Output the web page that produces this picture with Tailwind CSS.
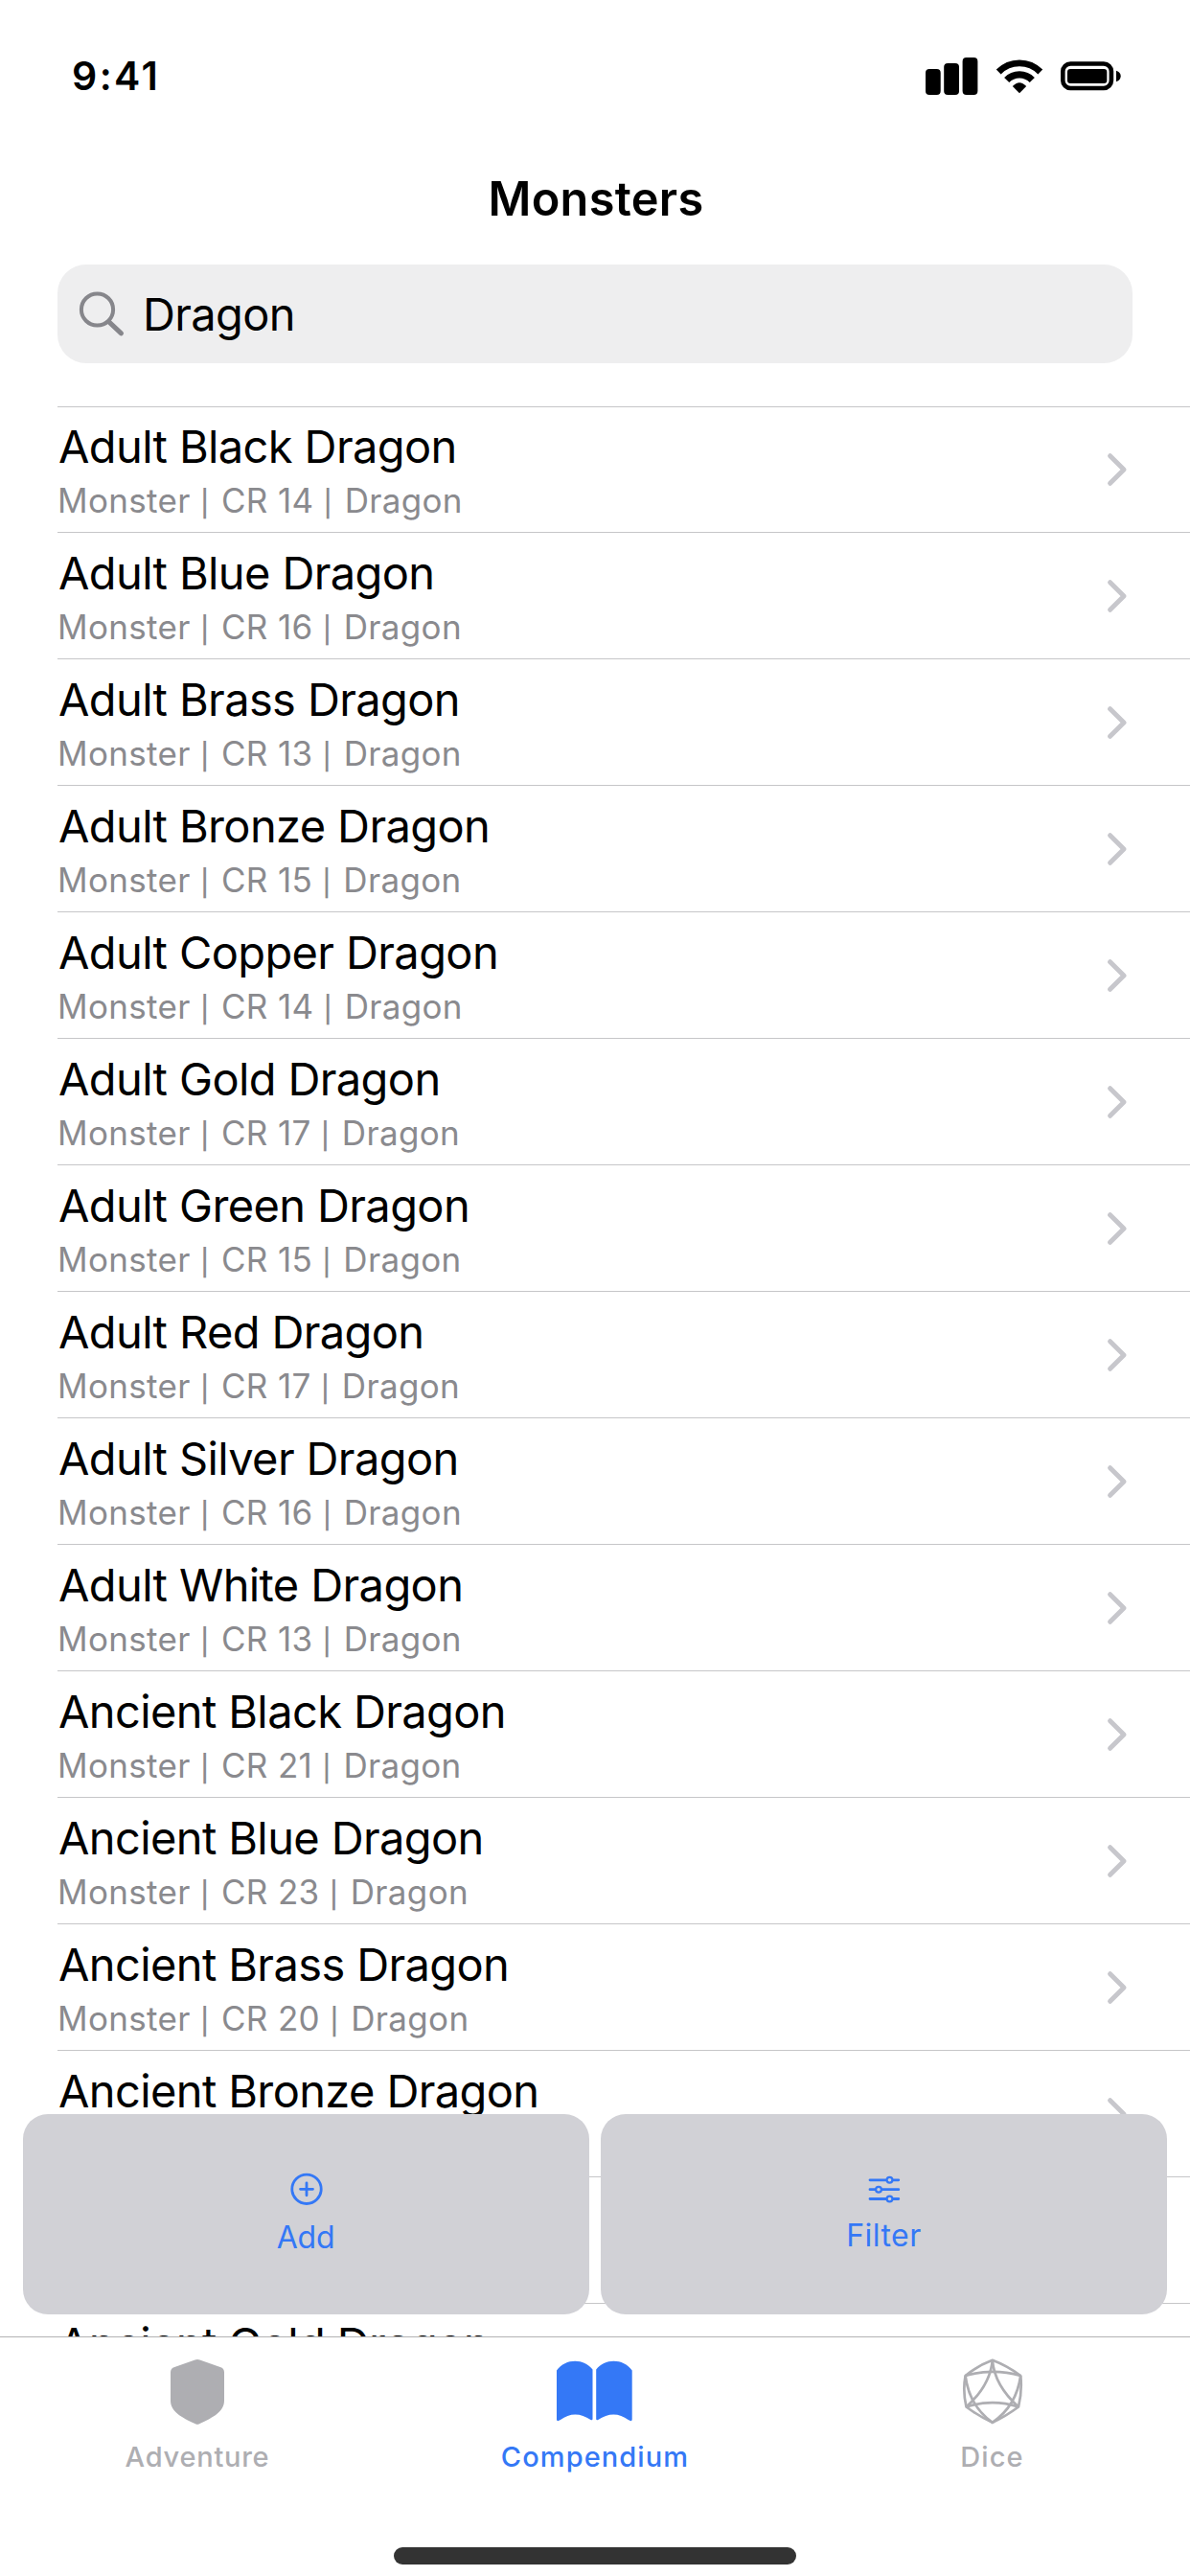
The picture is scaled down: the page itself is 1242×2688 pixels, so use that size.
<!DOCTYPE html>
<html lang="en">
<head>
<meta charset="utf-8">
<title>Monsters</title>
<script src="https://cdn.jsdelivr.net/npm/@tailwindcss/browser@4"></script>
</head>
<body class="bg-white">
<div class="relative flex h-[2688px] w-[1242px] flex-col overflow-hidden bg-white font-['Inter',sans-serif] text-black">

  <!-- Status bar -->
  <header class="flex h-[132px] shrink-0 items-start justify-between pl-[75px] pr-[72px] pt-[54px]">
    <div class="h-[50px] text-[41px] font-semibold leading-[50px] tracking-[2.4px]">9:41</div>
    <svg class="mt-[6px] h-10 w-[204px]" viewBox="966 60 204 40" fill="none">
      <g fill="#000">
        <rect x="966" y="72" width="15.7" height="27" rx="4"/>
        <rect x="985.2" y="66" width="15.8" height="33" rx="4"/>
        <rect x="1004.6" y="60" width="15.8" height="39" rx="4"/>
        <path d="M1064 97.2 L1056.8 90 Q1064 82.4 1071.2 90 Z"/>
        <rect x="1114" y="72" width="41.3" height="15" rx="3"/>
        <path d="M1165 73.8 Q1169.7 75.5 1169.7 79.5 Q1169.7 83.5 1165 85.2 Z"/>
      </g>
      <g stroke="#000">
        <path d="M1042.2 75 A30.5 30.5 0 0 1 1085.8 75" stroke-width="6.8"/>
        <path d="M1050.7 83.5 A18.6 18.6 0 0 1 1077.3 83.5" stroke-width="7.2"/>
        <rect x="1109.3" y="66.5" width="50.6" height="25.5" rx="8" stroke-width="4.6"/>
      </g>
    </svg>
  </header>

  <h1 class="h-[144px] shrink-0 pl-[2px] pt-[46px] text-center text-[48.7px] font-semibold leading-[60px] tracking-[0.3px]">Monsters</h1>

  <!-- Search field -->
  <div class="mx-[60px] mb-[45px] flex h-[103px] shrink-0 items-center rounded-[30px] bg-[#eeeeef] pl-[22px]">
    <svg class="h-[50px] w-[50px]" viewBox="82 302 50 50" fill="none" stroke="#86868b" stroke-linecap="round">
      <circle cx="101.5" cy="322" r="16.6" stroke-width="4"/>
      <path d="M114 335.2 L126.5 346.9" stroke-width="5"/>
    </svg>
    <span class="ml-[17px] text-[47px] leading-[58px] tracking-[-0.64px]">Dragon</span>
  </div>

  <!-- Results -->
  <ul id="results" class="min-h-0 flex-1 overflow-hidden pl-[60px]"></ul>

  <template id="row">
    <li class="flex h-[132px] items-center justify-between border-b border-[#c6c6c8] pr-[64px] first:shadow-[inset_0_1px_0_#c6c6c8]">
      <div class="h-full pt-[14px]">
        <div class="ml-px text-[47px] leading-[56px] tracking-[-0.62px]" data-name></div>
        <div class="mt-[6px] text-[35px] leading-[44px] tracking-[0.33px] text-[#8a8a8e]">Monster <span class="mr-[2.2px] text-[27px] font-medium leading-none">|</span> CR <span data-cr></span> <span class="mr-[2.2px] text-[27px] font-medium leading-none">|</span> Dragon</div>
      </div>
      <svg class="mt-px h-[36px] w-[24px]" viewBox="0 0 24 36" fill="none" stroke="#c7c7cc" stroke-width="5" stroke-linecap="round" stroke-linejoin="round">
        <path d="M4.6 3.7 L19 18 L4.6 32.3"/>
      </svg>
    </li>
  </template>

  <!-- Tab bar -->
  <nav class="flex h-[250px] shrink-0 flex-col items-center border-t border-[#b2b2b4] bg-white">
    <div class="grid h-[219px] w-full grid-cols-3 text-[29px] font-medium leading-[36px]">
      <div class="flex flex-col items-center pr-[2px] pt-[21px] text-[#aeaeb2]">
        <svg class="h-[72px] w-[60px]" viewBox="176 2460 60 72" fill="currentColor">
          <path d="M203.5 2462.6 Q206 2461.6 208.5 2462.6 L230.5 2470.3 Q234 2471.6 234 2475.5 V2505 C234 2516 223 2522.5 208 2529.3 Q206 2530.4 204 2529.3 C189 2522.5 178 2516 178 2505 V2475.5 Q178 2471.6 181.5 2470.3 Z"/>
        </svg>
        <span class="mt-[14px] tracking-[0.75px]">Adventure</span>
      </div>
      <div class="flex flex-col items-center pt-[21px] text-[#3478f6]">
        <svg class="h-[72px] w-[84px]" viewBox="579 2460 84 72" fill="currentColor">
          <path d="M581 2473.5 C590 2460.8 609.5 2460.8 618.5 2472.5 V2524 Q618.5 2526 616.5 2525 C606 2517.5 594.5 2517.5 585 2525 Q581 2527.5 581 2524.5 Z"/>
          <path d="M659.7 2473.5 C650.7 2460.8 631.2 2460.8 622.2 2472.5 V2524 Q622.2 2526 624.2 2525 C634.7 2517.5 646.2 2517.5 655.7 2525 Q659.7 2527.5 659.7 2524.5 Z"/>
        </svg>
        <span class="mt-[14px] tracking-[1.1px]">Compendium</span>
      </div>
      <div class="flex flex-col items-center pl-px pt-[21px] text-[#aeaeb2]">
        <svg class="h-[72px] w-[68px]" viewBox="1001 2460 68 72" fill="none" stroke="currentColor" stroke-width="2.7" stroke-linejoin="round">
          <path d="M1034.8 2462.8 Q1050 2468.5 1064.2 2479 Q1066 2495 1062 2511.5 Q1048.5 2521.5 1034.8 2527.8 Q1021 2521.5 1007.5 2511.5 Q1003.6 2495 1006.6 2479 Q1019.5 2468.5 1034.8 2462.8 Z"/>
          <path d="M1006.6 2479 Q1035 2470.8 1064.2 2479"/>
          <path d="M1007.5 2511.5 Q1034.8 2502.8 1062 2511.5"/>
          <path d="M1034.8 2462.8 Q1032.5 2489 1007.5 2511.5"/>
          <path d="M1034.8 2462.8 Q1037 2489 1062 2511.5"/>
          <path d="M1006.6 2479 Q1010.5 2510.5 1034.8 2527.8 Q1060 2510.5 1064.2 2479"/>
        </svg>
        <span class="mt-[14px] tracking-[1.1px]">Dice</span>
      </div>
    </div>
    <div class="h-[18px] w-[420px] rounded-full bg-[#333333]"></div>
  </nav>

  <!-- Floating actions over the list -->
  <div class="absolute inset-x-6 top-[2206px] grid h-[209px] grid-cols-2 gap-3 text-[32px] leading-[40px] text-[#3478f6]">
    <button class="flex flex-col items-center rounded-[26px] bg-[#d1d1d6] pt-[60px]">
      <svg class="h-[36px] w-[36px]" viewBox="0 0 36 36" fill="none" stroke="currentColor" stroke-width="2.8" stroke-linecap="round">
        <circle cx="18" cy="18.3" r="15.2"/>
        <path d="M18 11.8 V24.8 M11.5 18.3 H24.5"/>
      </svg>
      <span class="mt-[13px] mr-px tracking-[-0.2px]">Add</span>
    </button>
    <button class="flex flex-col items-center rounded-[26px] bg-[#d1d1d6] pt-[60px]">
      <svg class="h-[36px] w-[36px]" viewBox="904.5 2266 36 36" fill="none" stroke="currentColor" stroke-width="2.8" stroke-linecap="round">
        <path d="M907.5 2274.8 H937.3 M907.5 2284.7 H937.3 M907.5 2294.5 H937.3"/>
        <g fill="#d1d1d6" stroke-width="2.2">
          <circle cx="928" cy="2274.8" r="2.9"/>
          <circle cx="916.5" cy="2284.7" r="2.9"/>
          <circle cx="928" cy="2294.5" r="2.9"/>
        </g>
      </svg>
      <span class="mt-[11px] tracking-[0.45px]">Filter</span>
    </button>
  </div>
</div>

<script>
  const monsters = [
    ['Adult Black Dragon', 14], ['Adult Blue Dragon', 16], ['Adult Brass Dragon', 13],
    ['Adult Bronze Dragon', 15], ['Adult Copper Dragon', 14], ['Adult Gold Dragon', 17],
    ['Adult Green Dragon', 15], ['Adult Red Dragon', 17], ['Adult Silver Dragon', 16],
    ['Adult White Dragon', 13], ['Ancient Black Dragon', 21], ['Ancient Blue Dragon', 23],
    ['Ancient Brass Dragon', 20], ['Ancient Bronze Dragon', 22], ['Ancient Copper Dragon', 21],
    ['Ancient Gold Dragon', 24],
  ];
  const list = document.getElementById('results');
  const row = document.getElementById('row');
  for (const [name, cr] of monsters) {
    const item = row.content.cloneNode(true);
    item.querySelector('[data-name]').textContent = name;
    item.querySelector('[data-cr]').textContent = cr;
    list.append(item);
  }
</script>
</body>
</html>
